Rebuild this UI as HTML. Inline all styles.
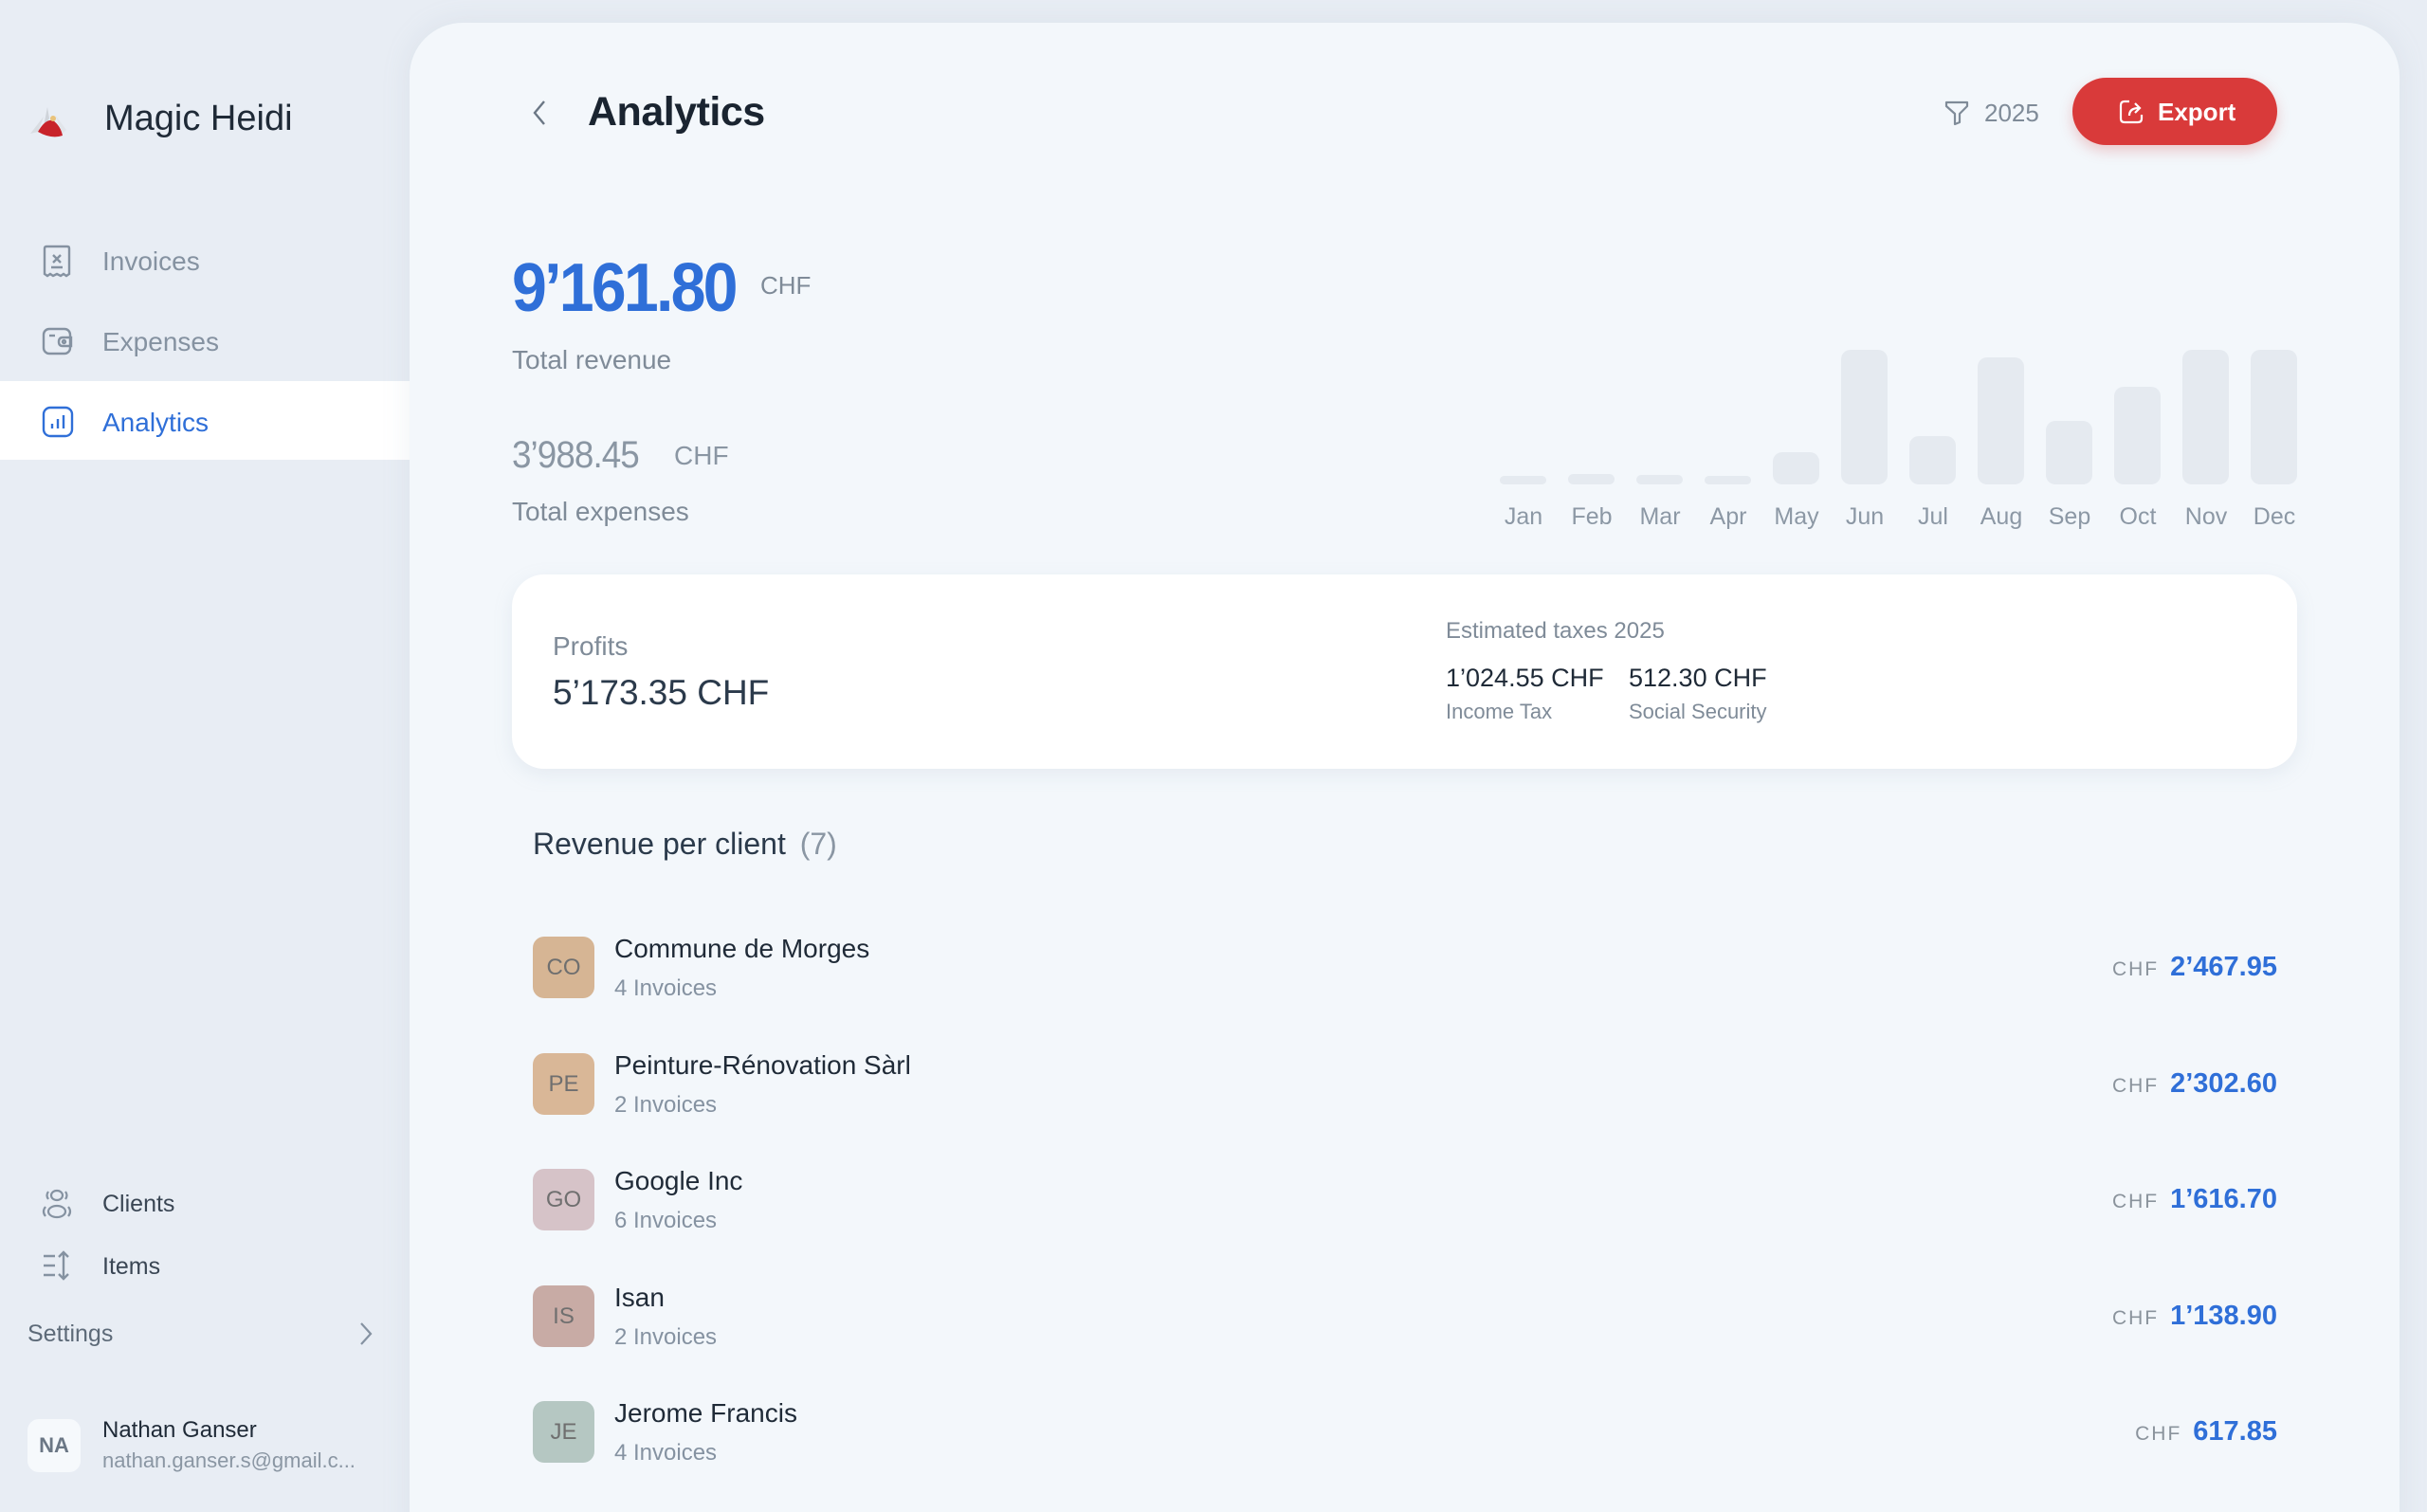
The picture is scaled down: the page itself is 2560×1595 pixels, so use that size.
<!DOCTYPE html>
<html><head><meta charset="utf-8"><style>
*{margin:0;padding:0;box-sizing:border-box}
html,body{width:2560px;height:1595px;overflow:hidden}
body{background:#e8edf4;font-family:"Liberation Sans",sans-serif;position:relative;color:#1f2a37}
#wrap{position:absolute;left:0;top:0;width:2560px;height:1595px;overflow:hidden}
.a{position:absolute;white-space:nowrap;line-height:1}
.main{position:absolute;left:432px;top:24px;width:2099px;height:1640px;background:#f3f7fb;border-radius:56px;box-shadow:0 0 30px rgba(150,165,185,.15)}
.nav{color:#8592a1;font-size:28px}
.bar{position:absolute;width:49px;background:#e5eaf0;border-radius:10px;bottom:1084px}
.mon{position:absolute;top:531px;width:72px;text-align:center;font-size:25px;color:#8c98a5;margin-left:-11px}
.av{position:absolute;left:562px;width:65px;height:65px;border-radius:12px;color:#6f6f6f;font-size:24px;display:flex;align-items:center;justify-content:center}
.nm{position:absolute;left:648px;font-size:28px;color:#1f2a37;line-height:1}
.sb{position:absolute;left:648px;font-size:24px;color:#8592a1;line-height:1}
.amt{position:absolute;right:158px;font-size:29px;font-weight:bold;color:#2f6fd8;line-height:1}
.amt span{font-size:21px;font-weight:normal;color:#8a939c;letter-spacing:2px;margin-right:12px}
</style></head><body><div id="wrap">
<svg class="a" style="left:26px;top:103px" width="56" height="46" viewBox="0 0 56 46"><path d="M6 38 L20 20 L14 36Z" fill="#d9dde2"/><path d="M24 10 L20 30 L26 22Z" fill="#cfd4da"/><path d="M14 36 Q22 22 30 24 Q38 30 40 40 Q28 44 14 36Z" fill="#c8232a"/><circle cx="30" cy="22" r="3" fill="#e9c27a"/><path d="M32 18 L44 34 L40 38Z" fill="#e1e5ea"/></svg>
<div class="a" style="left:110px;top:106px;font-size:38px;color:#1f2a37">Magic Heidi</div>

<svg class="a" style="left:44px;top:258px" width="32" height="36" viewBox="0 0 32 36" fill="none" stroke="#8592a1" stroke-width="2.4"><path d="M3 4 Q3 2 5 2 H27 Q29 2 29 4 V31 L26 33 L23 31 L20 33 L16 31 L12 33 L9 31 L6 33 L3 31Z"/><path d="M12 11 L20 19 M20 11 L12 19 M10 24 H22"/></svg>
<div class="a nav" style="left:108px;top:262px">Invoices</div>
<svg class="a" style="left:44px;top:345px" width="34" height="30" viewBox="0 0 34 30" fill="none" stroke="#8592a1" stroke-width="2.4"><rect x="2" y="2" width="28" height="26" rx="6"/><path d="M8 9 H14"/><path d="M22 11 H31 V20 H22 Q18 20 18 15.5 Q18 11 22 11Z"/><circle cx="23.5" cy="15.5" r="1.5"/></svg>
<div class="a nav" style="left:108px;top:347px">Expenses</div>
<div class="a" style="left:0;top:402px;width:432px;height:83px;background:#fff"></div>
<svg class="a" style="left:44px;top:428px" width="34" height="34" viewBox="0 0 34 34" fill="none" stroke="#2f6fd8" stroke-width="2.4"><rect x="2" y="2" width="30" height="30" rx="7"/><path d="M11 24 V19 M17 24 V14 M23 24 V10"/></svg>
<div class="a nav" style="left:108px;top:432px;color:#2f6fd8">Analytics</div>

<svg class="a" style="left:42px;top:1252px" width="36" height="36" viewBox="0 0 36 36" fill="none" stroke="#8592a1" stroke-width="2.2"><ellipse cx="18" cy="9" rx="6" ry="5"/><path d="M9 5 Q6 9 9 13 M27 5 Q30 9 27 13"/><ellipse cx="18" cy="26" rx="9" ry="6"/><path d="M6 21 Q2 26 6 31 M30 21 Q34 26 30 31"/></svg>
<div class="a" style="left:108px;top:1258px;font-size:25px;color:#3a4654">Clients</div>
<svg class="a" style="left:44px;top:1318px" width="32" height="34" viewBox="0 0 32 34" fill="none" stroke="#8592a1" stroke-width="2.4"><path d="M2 7 H14 M2 17 H14 M2 27 H14 M23 3 V31 M18 8 L23 3 L28 8 M18 26 L23 31 L28 26"/></svg>
<div class="a" style="left:108px;top:1324px;font-size:25px;color:#3a4654">Items</div>
<div class="a" style="left:29px;top:1395px;font-size:25px;color:#5d6a78">Settings</div>
<svg class="a" style="left:378px;top:1394px" width="16" height="26" viewBox="0 0 16 26" fill="none" stroke="#8592a1" stroke-width="2.2"><path d="M3 2 L13 13 L3 24"/></svg>
<div class="a" style="left:29px;top:1497px;width:56px;height:56px;border-radius:12px;background:#f6f9fc;display:flex;align-items:center;justify-content:center;font-size:22px;font-weight:bold;color:#6b7785">NA</div>
<div class="a" style="left:108px;top:1497px;font-size:24px;color:#1f2a37">Nathan Ganser</div>
<div class="a" style="left:108px;top:1530px;font-size:22px;color:#8a96a3">nathan.ganser.s@gmail.c...</div>

<div class="main"></div>
<svg class="a" style="left:560px;top:104px" width="18" height="30" viewBox="0 0 18 30" fill="none" stroke="#6b7785" stroke-width="2.4"><path d="M14 3 L4 15 L14 27"/></svg>
<div class="a" style="left:620px;top:97px;font-size:43px;font-weight:bold;color:#1a2430;letter-spacing:-0.5px">Analytics</div>
<svg class="a" style="left:2050px;top:105px" width="28" height="28" viewBox="0 0 28 28" fill="none" stroke="#7f8b98" stroke-width="2.2"><path d="M3 3 H25 V7 L17 15 V24 L12 26 V15 L3 7Z" stroke-linejoin="round"/></svg>
<div class="a" style="left:2093px;top:106px;font-size:26px;color:#7f8b98">2025</div>
<div class="a" style="left:2186px;top:82px;width:216px;height:71px;border-radius:36px;background:#d93a3a;box-shadow:0 6px 14px rgba(217,58,58,.25)"></div>
<svg class="a" style="left:2234px;top:104px" width="28" height="28" viewBox="0 0 28 28" fill="none" stroke="#fff" stroke-width="2.2"><path d="M12 3 H7 Q3 3 3 7 V21 Q3 25 7 25 H21 Q25 25 25 21 V17"/><path d="M12 18 Q12 10 22 10 M18 5 L23 10 L18 15"/></svg>
<div class="a" style="left:2276px;top:105px;font-size:26px;color:#fff;font-weight:bold">Export</div>

<div class="a" style="left:540px;top:268px;font-size:72px;font-weight:bold;color:#2f6fd8;letter-spacing:-3px;transform:scaleX(0.92);transform-origin:left">9’161.80</div>
<div class="a" style="left:802px;top:288px;font-size:26px;color:#7f8b98">CHF</div>
<div class="a" style="left:540px;top:366px;font-size:28px;color:#7f8b98">Total revenue</div>
<div class="a" style="left:540px;top:460px;font-size:40px;color:#8a96a3;letter-spacing:-1px;transform:scaleX(0.92);transform-origin:left">3’988.45</div>
<div class="a" style="left:711px;top:467px;font-size:28px;color:#8a96a3">CHF</div>
<div class="a" style="left:540px;top:526px;font-size:28px;color:#7f8b98">Total expenses</div>

<div class="bar" style="left:1582px;height:9px"></div>
<div class="bar" style="left:1654px;height:11px"></div>
<div class="bar" style="left:1726px;height:10px"></div>
<div class="bar" style="left:1798px;height:9px"></div>
<div class="bar" style="left:1870px;height:34px"></div>
<div class="bar" style="left:1942px;height:142px"></div>
<div class="bar" style="left:2014px;height:51px"></div>
<div class="bar" style="left:2086px;height:134px"></div>
<div class="bar" style="left:2158px;height:67px"></div>
<div class="bar" style="left:2230px;height:103px"></div>
<div class="bar" style="left:2302px;height:142px"></div>
<div class="bar" style="left:2374px;height:142px"></div>
<div class="mon" style="left:1582px">Jan</div><div class="mon" style="left:1654px">Feb</div><div class="mon" style="left:1726px">Mar</div><div class="mon" style="left:1798px">Apr</div><div class="mon" style="left:1870px">May</div><div class="mon" style="left:1942px">Jun</div><div class="mon" style="left:2014px">Jul</div><div class="mon" style="left:2086px">Aug</div><div class="mon" style="left:2158px">Sep</div><div class="mon" style="left:2230px">Oct</div><div class="mon" style="left:2302px">Nov</div><div class="mon" style="left:2374px">Dec</div>

<div class="a" style="left:540px;top:606px;width:1883px;height:205px;background:#fff;border-radius:34px;box-shadow:0 6px 20px rgba(150,165,185,.15)"></div>
<div class="a" style="left:583px;top:668px;font-size:28px;color:#7f8b98">Profits</div>
<div class="a" style="left:583px;top:712px;font-size:37px;color:#2b3a4b">5’173.35 CHF</div>
<div class="a" style="left:1525px;top:654px;font-size:24px;color:#7f8b98">Estimated taxes 2025</div>
<div class="a" style="left:1525px;top:702px;font-size:27px;color:#1f2a37">1’024.55 CHF</div>
<div class="a" style="left:1718px;top:702px;font-size:27px;color:#1f2a37">512.30 CHF</div>
<div class="a" style="left:1525px;top:740px;font-size:22px;color:#7f8b98">Income Tax</div>
<div class="a" style="left:1718px;top:740px;font-size:22px;color:#7f8b98">Social Security</div>

<div class="a" style="left:562px;top:874px;font-size:32px;color:#2b3a4b">Revenue per client <span style="color:#8a96a3;margin-left:6px">(7)</span></div>

<div class="av" style="top:988px;background:#d6b594">CO</div>
<div class="nm" style="top:987px">Commune de Morges</div><div class="sb" style="top:1031px">4 Invoices</div>
<div class="amt" style="top:1006px"><span>CHF</span>2’467.95</div>

<div class="av" style="top:1111px;background:#d9b797">PE</div>
<div class="nm" style="top:1110px">Peinture-Rénovation Sàrl</div><div class="sb" style="top:1154px">2 Invoices</div>
<div class="amt" style="top:1129px"><span>CHF</span>2’302.60</div>

<div class="av" style="top:1233px;background:#d6c3c8">GO</div>
<div class="nm" style="top:1232px">Google Inc</div><div class="sb" style="top:1276px">6 Invoices</div>
<div class="amt" style="top:1251px"><span>CHF</span>1’616.70</div>

<div class="av" style="top:1356px;background:#c8aba5">IS</div>
<div class="nm" style="top:1355px">Isan</div><div class="sb" style="top:1399px">2 Invoices</div>
<div class="amt" style="top:1374px"><span>CHF</span>1’138.90</div>

<div class="av" style="top:1478px;background:#b5c7c2">JE</div>
<div class="nm" style="top:1477px">Jerome Francis</div><div class="sb" style="top:1521px">4 Invoices</div>
<div class="amt" style="top:1496px"><span>CHF</span>617.85</div>
</div></body></html>
